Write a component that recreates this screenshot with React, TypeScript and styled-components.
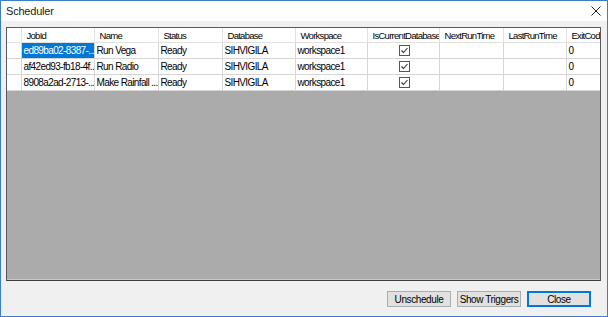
import styled, { createGlobalStyle } from 'styled-components';

const GlobalStyle = createGlobalStyle`
  html, body {
    margin: 0;
    padding: 0;
    background: #ffffff;
  }
  body {
    font-family: "Liberation Sans", Arial, sans-serif;
    font-size: 10px;
    color: #000;
  }
`;

interface Job {
  id: string;
  name: string;
  status: string;
  database: string;
  workspace: string;
  isCurrent: boolean;
  nextRun: string;
  lastRun: string;
  exitCode: string;
}

const jobs: Job[] = [
  { id: 'ed89ba02-8387-...', name: 'Run Vega', status: 'Ready', database: 'SIHVIGILA', workspace: 'workspace1', isCurrent: true, nextRun: '', lastRun: '', exitCode: '0' },
  { id: 'af42ed93-fb18-4f...', name: 'Run Radio', status: 'Ready', database: 'SIHVIGILA', workspace: 'workspace1', isCurrent: true, nextRun: '', lastRun: '', exitCode: '0' },
  { id: '8908a2ad-2713-...', name: 'Make Rainfall ...', status: 'Ready', database: 'SIHVIGILA', workspace: 'workspace1', isCurrent: true, nextRun: '', lastRun: '', exitCode: '0' },
];

const columns = [
  { title: '', width: 14 },
  { title: 'JobId', width: 73 },
  { title: 'Name', width: 64 },
  { title: 'Status', width: 64 },
  { title: 'Database', width: 73 },
  { title: 'Workspace', width: 72 },
  { title: 'IsCurrentDatabase', width: 72 },
  { title: 'NextRunTime', width: 64 },
  { title: 'LastRunTime', width: 63 },
  { title: 'ExitCode', width: 40 },
];

const tableWidth = columns.reduce((s, c) => s + c.width, 0);

const Window = styled.div`
  width: 608px;
  height: 317px;
  box-sizing: border-box;
  border: 1px solid #3c7fc4;
  display: flex;
  flex-direction: column;
  background: #f0f0f0;
`;

const TitleBar = styled.div`
  height: 20px;
  background: #ffffff;
  display: flex;
  align-items: center;
  justify-content: space-between;
  padding: 0 6px 0 5px;
  flex-shrink: 0;
`;

const Title = styled.span`
  font-size: 11px;
  color: #1a1a1a;
  letter-spacing: -0.2px;
`;

const Body = styled.div`
  flex: 1;
  display: flex;
  flex-direction: column;
  padding: 6px 6px 9px 5px;
`;

const Grid = styled.div`
  height: 254px;
  box-sizing: border-box;
  background: #ababab;
  border: 1px solid #5a5a5a;
  border-bottom-color: #3f3f3f;
  box-shadow: inset 0 -1px 0 #c8c8c8;
  overflow: hidden;
`;

const Table = styled.table<{ $width: number }>`
  border-collapse: collapse;
  table-layout: fixed;
  width: ${(p) => p.$width}px;
`;

const HeadCell = styled.th`
  height: 14px;
  padding: 0 0 0 5px;
  background: #ffffff;
  border-right: 1px solid #e2e2e2;
  border-bottom: 1px solid #e2e2e2;
  font-weight: normal;
  text-align: left;
  font-size: 9.5px;
  letter-spacing: -0.72px;
  white-space: nowrap;
  overflow: hidden;
  color: #000;
`;

const Cell = styled.td<{ $selected?: boolean; $center?: boolean }>`
  height: 15px;
  padding: 0 0 0 2px;
  background: ${(p) => (p.$selected ? '#0078d7' : '#ffffff')};
  color: ${(p) => (p.$selected ? '#ffffff' : '#000')};
  border-right: 1px solid #d6d6d6;
  border-bottom: 1px solid #d6d6d6;
  text-align: ${(p) => (p.$center ? 'center' : 'left')};
  white-space: nowrap;
  overflow: hidden;
  font-size: 10px;
  letter-spacing: -0.62px;
  line-height: 15px;
`;

const RowHeader = styled.td`
  height: 15px;
  padding: 0;
  background: #ffffff;
  border-right: 1px solid #d6d6d6;
  border-bottom: 1px solid #d6d6d6;
`;

const CheckBox = styled.span`
  display: inline-block;
  vertical-align: middle;
  width: 11px;
  height: 11px;
  margin-top: -2px;
`;

const Footer = styled.div`
  flex: 1;
  display: flex;
  justify-content: flex-end;
  align-items: flex-end;
  gap: 6px;
  padding-right: 10px;
`;

const Button = styled.button<{ $default?: boolean }>`
  width: 64px;
  height: 16px;
  box-sizing: border-box;
  padding: 0;
  background: #e1e1e1;
  border: 1px solid ${(p) => (p.$default ? '#0078d7' : '#adadad')};
  box-shadow: ${(p) => (p.$default ? 'inset 0 0 0 1px #0078d7' : 'none')};
  font-family: "Liberation Sans", Arial, sans-serif;
  font-size: 10px;
  letter-spacing: -0.4px;
  white-space: nowrap;
  color: #000;
  line-height: 13px;
`;

function CheckIcon() {
  return (
    <CheckBox>
      <svg width="11" height="11" viewBox="0 0 11 11">
        <rect x="0.5" y="0.5" width="10" height="10" fill="#fff" stroke="#555" />
        <path d="M2.5 5.5 L4.5 7.5 L8.5 3" fill="none" stroke="#333" strokeWidth="1.1" />
      </svg>
    </CheckBox>
  );
}

function CloseIcon() {
  return (
    <svg width="10" height="10" viewBox="0 0 10 10">
      <path d="M0.5 0.5 L9.5 9.5 M9.5 0.5 L0.5 9.5" stroke="#222" strokeWidth="1" />
    </svg>
  );
}

export default function App() {
  return (
    <>
      <GlobalStyle />
      <Window>
        <TitleBar>
          <Title>Scheduler</Title>
          <CloseIcon />
        </TitleBar>
        <Body>
          <Grid>
            <Table $width={tableWidth}>
              <colgroup>
                {columns.map((c, i) => (
                  <col key={i} style={{ width: c.width }} />
                ))}
              </colgroup>
              <thead>
                <tr>
                  {columns.map((c, i) => (
                    <HeadCell key={i}>{c.title}</HeadCell>
                  ))}
                </tr>
              </thead>
              <tbody>
                {jobs.map((job, i) => (
                  <tr key={job.id}>
                    <RowHeader />
                    <Cell $selected={i === 0}>{job.id}</Cell>
                    <Cell>{job.name}</Cell>
                    <Cell>{job.status}</Cell>
                    <Cell>{job.database}</Cell>
                    <Cell>{job.workspace}</Cell>
                    <Cell $center>{job.isCurrent && <CheckIcon />}</Cell>
                    <Cell>{job.nextRun}</Cell>
                    <Cell>{job.lastRun}</Cell>
                    <Cell>{job.exitCode}</Cell>
                  </tr>
                ))}
              </tbody>
            </Table>
          </Grid>
          <Footer>
            <Button>Unschedule</Button>
            <Button>Show Triggers</Button>
            <Button $default>Close</Button>
          </Footer>
        </Body>
      </Window>
    </>
  );
}
